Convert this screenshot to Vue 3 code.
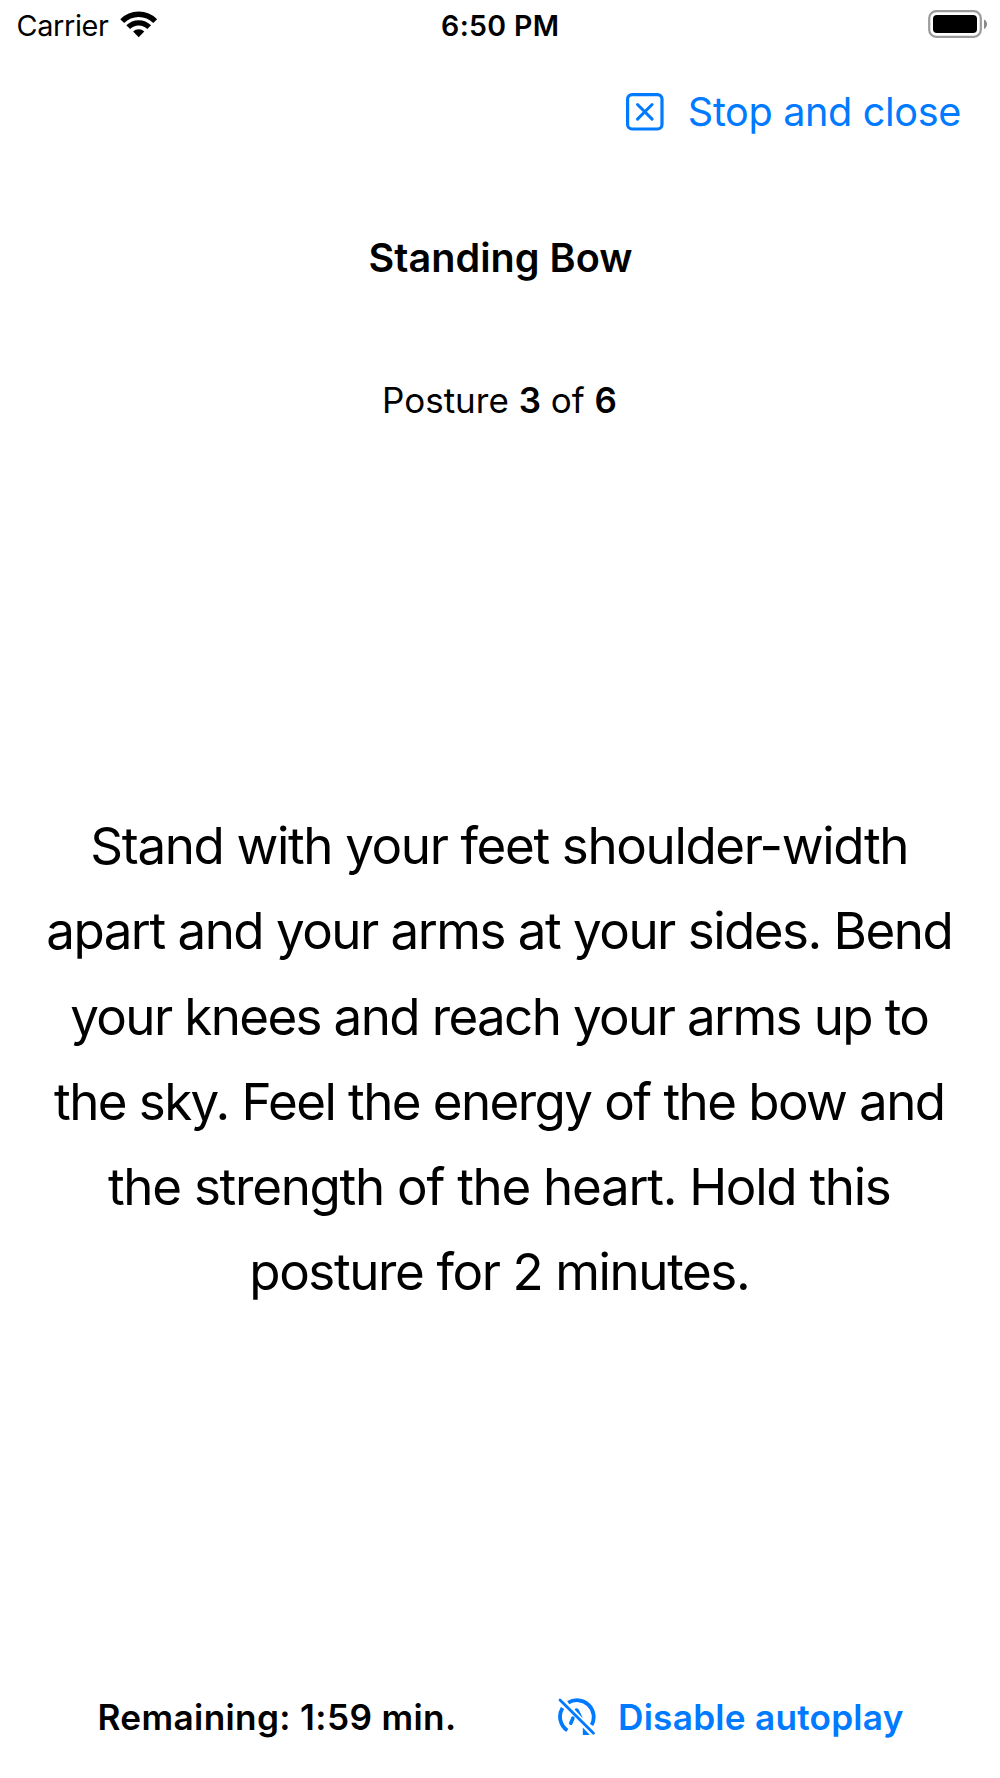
<script setup>
const instructions = [
  { text: 'Stand with your feet shoulder-width', spacing: -1.36 },
  { text: 'apart and your arms at your sides. Bend', spacing: -1.51 },
  { text: 'your knees and reach your arms up to', spacing: -1.63 },
  { text: 'the sky. Feel the energy of the bow and', spacing: -1.58 },
  { text: 'the strength of the heart. Hold this', spacing: -1.28 },
  { text: 'posture for 2 minutes.', spacing: -1.4 },
]
</script>

<template>
  <main class="screen">
    <header class="status">
      <div class="network">
        <span class="carrier">Carrier</span>
        <svg class="wifi" width="38" height="28" viewBox="0 0 38 28">
          <g fill="none" stroke="#000" stroke-width="5.4">
            <path d="M2.2 11.1a23.2 23.2 0 0 1 33 0" />
            <path d="M8.2 17.2a14.9 14.9 0 0 1 21 0" />
          </g>
          <path d="M18.7 27.2l-5.6-5.6a8 8 0 0 1 11.2 0z" />
        </svg>
      </div>
      <time class="clock">6:50 PM</time>
      <div class="power">
        <svg width="60" height="30" viewBox="0 0 60 30">
          <rect x="1.2" y="1.2" width="51.6" height="25.6" rx="7" fill="none" stroke="#9b9b9b" stroke-width="2.2" />
          <rect x="5" y="5" width="44" height="18" rx="4" />
          <path d="M56 9.5c4 1.5 4 8 0 9.5z" fill="#8a8a8a" />
        </svg>
      </div>
    </header>

    <nav class="toolbar">
      <button class="action stop">
        <svg width="38" height="38" viewBox="0 0 38 38" fill="none" stroke="currentColor" stroke-linecap="round">
          <rect x="1.6" y="1.6" width="34.4" height="34.4" rx="4.5" stroke-width="3.2" />
          <path d="M11.5 11.5l14.6 14.6M26.1 11.5l-14.6 14.6" stroke-width="3" />
        </svg>
        <span>Stop and close</span>
      </button>
    </nav>

    <h1 class="title">Standing Bow</h1>
    <p class="progress">Posture <b>3</b> of <b>6</b></p>

    <section class="instructions">
      <span
        v-for="line in instructions"
        :key="line.text"
        class="line"
        :style="{ letterSpacing: line.spacing + 'px' }"
      >{{ line.text }}</span>
    </section>

    <footer class="controls">
      <span class="remaining">Remaining: 1:59 min.</span>
      <button class="action autoplay">
        <svg width="38" height="38" viewBox="0 0 38 38" fill="none" stroke="currentColor">
          <path d="M10.2 4.7A16.7 16.7 0 0 1 33.6 27" stroke-width="3.8" />
          <path d="M4.5 10A16.7 16.7 0 0 0 9.3 32.5" stroke-width="3.8" />
          <path d="M2 2L35.5 35.3" stroke-width="2.8" stroke-linecap="round" />
          <path d="M16.500 11.5q2-2.500 4.200 0l4.300 9z" fill="currentColor" stroke="none" />
          <path d="M14.9 20.2L12.8 25.2" stroke-width="3.6" stroke-linecap="round" />
          <path d="M24.8 29.5v7.5h7z" fill="currentColor" stroke="none" />
        </svg>
        <span>Disable autoplay</span>
      </button>
    </footer>
  </main>
</template>

<style>
body {
  background: #fff;
}
</style>

<style scoped>
.screen {
  display: flex;
  flex-direction: column;
  box-sizing: border-box;
  width: 1000px;
  height: 1778px;
  background: #fff;
  color: #000;
  font-family: Inter, "Liberation Sans", sans-serif;
  white-space: nowrap;
}

.status {
  display: grid;
  grid-template-columns: 1fr auto 1fr;
  align-items: center;
  height: 50px;
  padding: 0 12px 0 16.5px;
  font-size: 28.8px;
  line-height: 48px;
}

.network {
  display: flex;
  align-items: center;
  gap: 11px;
}

.carrier {
  padding-top: 2px;
  letter-spacing: -0.34px;
}

.wifi {
  margin-top: -2px;
}

.clock {
  padding-top: 2px;
  font-weight: 600;
  font-size: 28.5px;
  letter-spacing: 0.35px;
  margin-left: -4px;
}

.power {
  display: flex;
  justify-content: flex-end;
}

.action {
  display: flex;
  align-items: center;
  padding: 0;
  border: 0;
  background: none;
  color: #007aff;
  font: inherit;
}

.toolbar {
  display: flex;
  justify-content: flex-end;
  height: 56px;
  margin-top: 34px;
  padding-right: 39px;
}

.stop {
  gap: 24px;
  font-size: 39.6px;
  letter-spacing: -0.34px;
}

.title {
  margin: 90px 0 0;
  padding-left: 1px;
  font-size: 39.6px;
  font-weight: 600;
  line-height: 56px;
  letter-spacing: 0.02px;
  text-align: center;
}

.progress {
  margin: 86px 0 0;
  padding-right: 1px;
  font-size: 35px;
  line-height: 56px;
  text-align: center;
}

.progress b {
  font-weight: 600;
}

.instructions {
  display: flex;
  flex-direction: column;
  margin-top: 375px;
  padding-right: 1.5px;
  font-size: 51.1px;
  line-height: 85.3px;
  text-align: center;
}

.controls {
  display: flex;
  align-items: center;
  gap: 101px;
  height: 56px;
  margin: auto 0 33px;
  padding-left: 97.5px;
  font-size: 35.2px;
  font-weight: 600;
}

.remaining {
  letter-spacing: 0.35px;
}

.autoplay {
  gap: 22.5px;
  letter-spacing: 0.24px;
}
</style>
